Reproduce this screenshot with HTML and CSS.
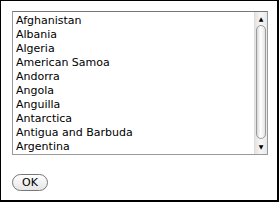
FILE: index.html
```html
<html>
  <head>
    <link rel="stylesheet" href="styles.css">
  </head>
  <body>
    <div class="frame">
      <div class="listbox">
        <div class="options">
          <div class="option">Afghanistan</div>
          <div class="option">Albania</div>
          <div class="option">Algeria</div>
          <div class="option">American Samoa</div>
          <div class="option">Andorra</div>
          <div class="option">Angola</div>
          <div class="option">Anguilla</div>
          <div class="option">Antarctica</div>
          <div class="option">Antigua and Barbuda</div>
          <div class="option">Argentina</div>
        </div>
        <div class="scrollbar">
          <div class="arrow up">&#9650;</div>
          <div class="thumb"></div>
          <div class="arrow down">&#9660;</div>
        </div>
      </div>
      <div class="actions">
        <button class="ok-btn">OK</button>
      </div>
    </div>
  </body>
</html>
```

FILE: styles.css
```css
body {
  margin: 0;
  background: white;
  font-family: "DejaVu Sans", sans-serif;
}

.frame {
  box-sizing: border-box;
  width: 279px;
  height: 202px;
  border: 2px solid black;
  border-top-width: 1px;
  border-left-width: 1px;
  padding: 10px 10px 0 11px;
}

.listbox {
  box-sizing: border-box;
  width: 256px;
  height: 144px;
  border: 1px solid #999;
  border-top-color: #777;
  display: flex;
  background: white;
}

.options {
  flex: 1;
  overflow: hidden;
  padding: 2px 0 0 3px;
}

.option {
  font-size: 11px;
  line-height: 14px;
  height: 14px;
  color: black;
  white-space: nowrap;
}

.scrollbar {
  width: 12px;
  display: flex;
  flex-direction: column;
  background: linear-gradient(to right, #e4e4e4, #f7f7f7 50%, #e8e8e8);
  border-left: 1px solid #ddd;
}

.arrow {
  height: 12px;
  font-size: 6px;
  line-height: 12px;
  text-align: center;
  color: black;
}

.arrow.up {
  margin-top: 1px;
}

.arrow.down {
  margin-bottom: 1px;
}

.thumb {
  flex: 1;
  margin: 0 1px 2px 1px;
  border: 1px solid #9a9a9a;
  border-radius: 6px;
  background: linear-gradient(to right, #d8d8d8, #ffffff 45%, #e2e2e2);
}

.actions {
  padding-top: 19px;
}

.ok-btn {
  box-sizing: border-box;
  width: 36px;
  height: 17px;
  padding: 0;
  border: 1px solid #777;
  border-radius: 9px;
  background: linear-gradient(#ffffff, #e6e6e6);
  font-family: "DejaVu Sans", sans-serif;
  font-size: 11px;
  line-height: 15px;
  color: black;
}
```
